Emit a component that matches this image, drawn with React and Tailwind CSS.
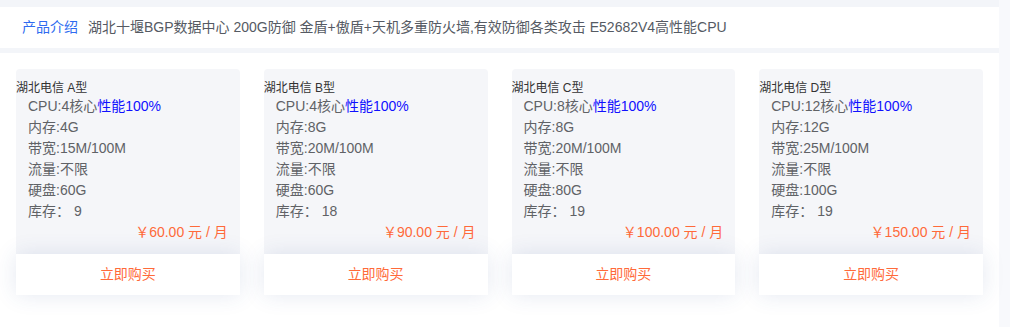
import React from "react";

const cards = [
  { name: "湖北电信 A型", cpu: "4", mem: "4G", bw: "15M/100M", disk: "60G", stock: "9", price: "60.00" },
  { name: "湖北电信 B型", cpu: "4", mem: "8G", bw: "20M/100M", disk: "60G", stock: "18", price: "90.00" },
  { name: "湖北电信 C型", cpu: "8", mem: "8G", bw: "20M/100M", disk: "80G", stock: "19", price: "100.00" },
  { name: "湖北电信 D型", cpu: "12", mem: "12G", bw: "25M/100M", disk: "100G", stock: "19", price: "150.00" },
];

function Card({ c }) {
  return (
    <div className="w-[224px] flex flex-col">
      <div className="bg-[#f5f6f9] rounded-t-[4px] pt-[11px] pb-[11px]">
        <div className="text-[12px] leading-[16px] text-[#333]">{c.name}</div>
        <div className="pl-[12px] text-[14px] leading-[21px] text-[#606266]">
          <div>
            CPU:{c.cpu}核心<span className="text-[#1010ff]">性能100%</span>
          </div>
          <div>内存:{c.mem}</div>
          <div>带宽:{c.bw}</div>
          <div>流量:不限</div>
          <div>硬盘:{c.disk}</div>
          <div>库存： {c.stock}</div>
        </div>
        <div className="text-right pr-[12px] text-[14px] leading-[21px] text-[#ff6a3a]">
          ￥{c.price} 元 / 月
        </div>
      </div>
      <div className="relative z-10 h-[41px] bg-white flex items-center justify-center text-[14px] text-[#ff6a3a] shadow-[0_0_22px_rgba(50,80,150,0.13)]">
        立即购买
      </div>
    </div>
  );
}

export default function App() {
  return (
    <div
      className="w-[1010px] h-[327px] bg-[#f8f9fc] overflow-hidden"
      style={{ fontFamily: '"Liberation Sans", "Noto Sans CJK SC", sans-serif' }}
    >
      <div className="w-[999px] h-full bg-[#f3f5f9] pt-[7px] flex flex-col">
        <div className="h-[41px] bg-white flex items-center pl-[22px] text-[14px]">
          <span className="text-[#2f6bf0]">产品介绍</span>
          <span className="ml-[10px] text-[#555a63]">
            湖北十堰BGP数据中心 200G防御 金盾+傲盾+天机多重防火墙,有效防御各类攻击 E52682V4高性能CPU
          </span>
        </div>
        <div className="mt-[5px] flex-1 bg-white pt-[16px] px-[16px] flex gap-[24px]">
          {cards.map((c) => (
            <Card key={c.name} c={c} />
          ))}
        </div>
      </div>
    </div>
  );
}
